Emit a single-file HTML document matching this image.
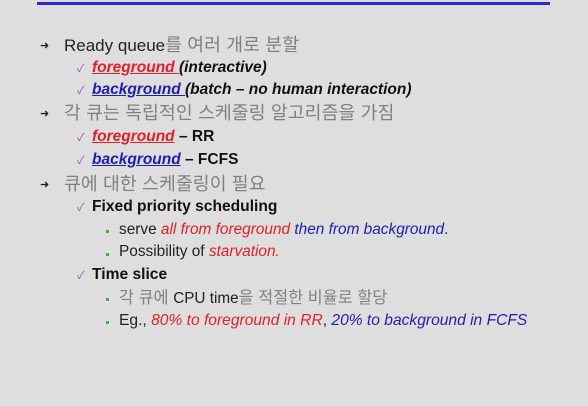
<!DOCTYPE html>
<html><head><meta charset="utf-8"><style>
body{margin:0;width:588px;height:406px;background:#dedede;overflow:hidden;position:relative;font-family:"Liberation Sans","Noto Sans CJK KR",sans-serif;}
.l{position:absolute;white-space:nowrap;line-height:22px;}
.k{color:#808080;letter-spacing:0.1px}
.r{color:#e0202a}.b{color:#2020b0}
.a{position:absolute;font-size:11px;color:#222}
.c{position:absolute;font-size:11px;color:#a050c0}
.d{position:absolute;width:3px;height:3px;background:#40b040}
</style></head><body>
<div style="position:absolute;left:37px;top:2px;width:513px;height:3px;background:#2a2ad0"></div>

<div class="a" style="left:40px;top:39px">➜</div>
<div class="l" style="left:64px;top:34px;font-size:17px;color:#222">Ready queue<span class="k" style="font-size:18.3px">를 여러 개로 분할</span></div>
<div class="c" style="left:77px;top:60px">✓</div>
<div class="l" style="left:92px;top:57px;font-size:15.5px;font-weight:bold;font-style:italic;color:#111"><span class="r" style="text-decoration:underline">foreground </span>(interactive)</div>
<div class="c" style="left:77px;top:82px">✓</div>
<div class="l" style="left:92px;top:79px;font-size:15.5px;font-weight:bold;font-style:italic;color:#111"><span class="b" style="text-decoration:underline">background </span>(batch – no human interaction)</div>

<div class="a" style="left:40px;top:107px">➜</div>
<div class="l k" style="left:64px;top:102px;font-size:18.3px">각 큐는 독립적인 스케줄링 알고리즘을 가짐</div>
<div class="c" style="left:77px;top:129px">✓</div>
<div class="l" style="left:92px;top:126px;font-size:15.5px;font-weight:bold;color:#111"><span class="r" style="font-style:italic;text-decoration:underline">foreground</span> – RR</div>
<div class="c" style="left:77px;top:152px">✓</div>
<div class="l" style="left:92px;top:149px;font-size:15.5px;font-weight:bold;color:#111"><span class="b" style="font-style:italic;text-decoration:underline">background</span> – FCFS</div>

<div class="a" style="left:40px;top:178px">➜</div>
<div class="l k" style="left:64px;top:173px;font-size:18.3px">큐에 대한 스케줄링이 필요</div>
<div class="c" style="left:77px;top:199px">✓</div>
<div class="l" style="left:92px;top:196px;font-size:15.6px;font-weight:bold;color:#111">Fixed priority scheduling</div>
<div class="d" style="left:106px;top:230px"></div>
<div class="l" style="left:119px;top:219px;font-size:15.4px;color:#222">serve <i class="r">all from foreground</i> <i class="b">then from background</i>.</div>
<div class="d" style="left:106px;top:253px"></div>
<div class="l" style="left:119px;top:241px;font-size:15.4px;color:#222">Possibility of <i class="r">starvation.</i></div>
<div class="c" style="left:77px;top:267px">✓</div>
<div class="l" style="left:92px;top:264px;font-size:15.6px;font-weight:bold;color:#111">Time slice</div>
<div class="d" style="left:106px;top:298px"></div>
<div class="l" style="left:119px;top:287px;font-size:15.3px;color:#222"><span class="k" style="font-size:16.2px">각 큐에 </span>CPU time<span class="k" style="font-size:16.2px">을 적절한 비율로 할당</span></div>
<div class="d" style="left:106px;top:321px"></div>
<div class="l" style="left:119px;top:310px;font-size:15.6px;color:#222">Eg., <i class="r">80% to foreground in RR</i>, <i class="b">20% to background in FCFS</i></div>
</body></html>
